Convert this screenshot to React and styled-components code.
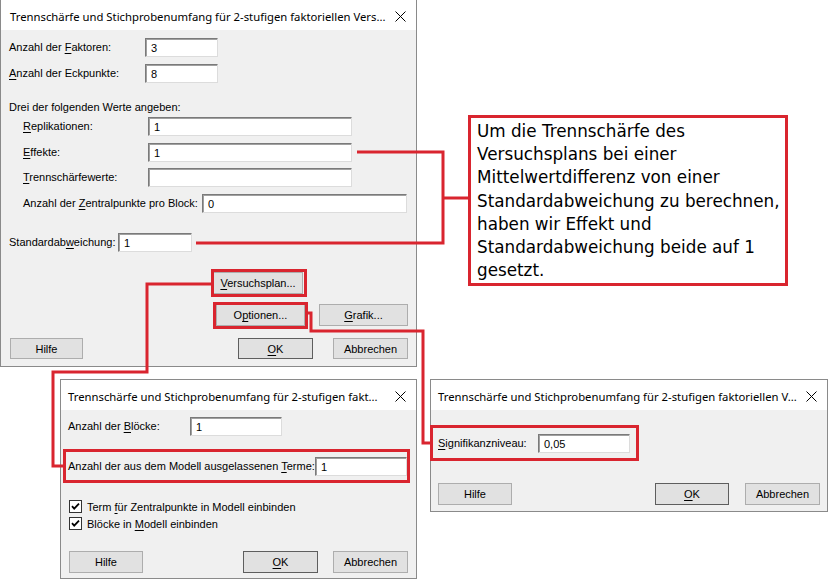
import React from 'react';
import styled, { createGlobalStyle } from 'styled-components';

const RED = '#d9252f';

const Global = createGlobalStyle`
  html, body { margin: 0; padding: 0; background: #fff; }
  body { font-family: "Liberation Sans", Arial, sans-serif; font-size: 11px; color: #000; }
`;

const Canvas = styled.div`
  position: relative;
  width: 828px;
  height: 580px;
  overflow: hidden;
  background: #fff;
`;

const Window = styled.div`
  position: absolute;
  left: ${p => p.$x}px;
  top: ${p => p.$y}px;
  width: ${p => p.$w}px;
  height: ${p => p.$h}px;
  box-sizing: border-box;
  border: 1px solid #8a8a8a;
  border-top-color: ${p => (p.$noTop ? 'transparent' : '#8a8a8a')};
  border-top-width: ${p => (p.$noTop ? 0 : 1)}px;
  background: #f0f0f0;
  display: flex;
  flex-direction: column;
`;

const TitleBar = styled.div`
  height: 30px;
  flex-shrink: 0;
  background: #fff;
  display: flex;
  align-items: center;
  justify-content: space-between;
  padding: 2px 10px 0 ${p => p.$pl}px;
  box-sizing: border-box;
`;

const TitleText = styled.span`
  white-space: nowrap;
  font-family: "Noto Sans", "DejaVu Sans", sans-serif;
  font-size: 11.3px;
`;

const CloseIcon = () => (
  <svg width="11" height="11" viewBox="0 0 11 11">
    <path d="M0.5 0.5 L10.5 10.5 M10.5 0.5 L0.5 10.5" stroke="#000" strokeWidth="1" fill="none" />
  </svg>
);

const Body = styled.div`
  flex: 1;
  display: flex;
  flex-direction: column;
  padding: ${p => p.$pt}px ${p => p.$pr}px 0 ${p => p.$pl}px;
`;

const Row = styled.div`
  display: flex;
  align-items: center;
  margin-top: ${p => p.$mt || 0}px;
  padding-left: ${p => p.$indent || 0}px;
  height: ${p => p.$h || 19}px;
`;

const Label = styled.span`
  width: ${p => p.$w}px;
  flex-shrink: 0;
  white-space: nowrap;
  padding-bottom: 2px;
`;

const Header = styled.div`
  margin-top: ${p => p.$mt}px;
  height: 16px;
  line-height: 16px;
  white-space: nowrap;
`;

const Input = styled.div`
  width: ${p => p.$w}px;
  height: 19px;
  box-sizing: border-box;
  background: #fff;
  border: 1px solid;
  border-color: #7a7a7a #dcdcdc #dcdcdc #7a7a7a;
  box-shadow: inset 1px 1px 0 #a0a0a0;
  padding-left: 5px;
  line-height: 18px;
  white-space: nowrap;
`;

const Key = styled.u`
  text-decoration: underline;
  text-underline-offset: 2px;
`;

const ButtonRow = styled.div`
  display: flex;
  align-items: center;
  margin-top: ${p => p.$mt}px;
  padding-left: ${p => p.$pl || 0}px;
  gap: ${p => p.$gap || 0}px;
`;

const Spacer = styled.div`
  flex: 1;
`;

const Button = styled.div`
  width: ${p => p.$w || 75}px;
  height: ${p => p.$h || 22}px;
  box-sizing: border-box;
  background: #e1e1e1;
  border: 1px solid ${p => (p.$default ? '#5e5e5e' : '#adadad')};
  display: flex;
  align-items: center;
  justify-content: center;
  white-space: nowrap;
  margin-left: ${p => p.$ml || 0}px;
`;

const CheckRow = styled.div`
  display: flex;
  align-items: center;
  gap: 5px;
  height: 17px;
  margin-top: ${p => p.$mt || 0}px;
  padding-left: 1px;
`;

const CheckBox = () => (
  <svg width="13" height="13" viewBox="0 0 13 13">
    <rect x="0.5" y="0.5" width="12" height="12" fill="#fff" stroke="#333" />
    <path d="M3 6.2 L5.2 8.6 L10 3.6" stroke="#000" strokeWidth="1.8" fill="none" />
  </svg>
);

const Callout = styled.div`
  position: absolute;
  left: 468px;
  top: 115px;
  width: 320px;
  height: 171px;
  box-sizing: border-box;
  border: 3px solid ${RED};
  background: #fff;
  padding: 2px 6px 0 6px;
  font-family: "DejaVu Sans", Verdana, sans-serif;
  font-size: 16.8px;
  line-height: 23.2px;
  color: #000;
  white-space: nowrap;
`;

const Overlay = styled.svg`
  position: absolute;
  left: 0;
  top: 0;
  pointer-events: none;
`;

export default function App() {
  return (
    <>
      <Global />
      <Canvas>
        {/* Main dialog */}
        <Window $x={0} $y={0} $w={417} $h={367} $noTop>
          <TitleBar $pl={9}>
            <TitleText>Trennschärfe und Stichprobenumfang für 2-stufigen faktoriellen Vers...</TitleText>
            <CloseIcon />
          </TitleBar>
          <Body $pt={8} $pr={8} $pl={8}>
            <Row>
              <Label $w={136}>Anzahl der <Key>F</Key>aktoren:</Label>
              <Input $w={73}>3</Input>
            </Row>
            <Row $mt={7}>
              <Label $w={136}><Key>A</Key>nzahl der Eckpunkte:</Label>
              <Input $w={73}>8</Input>
            </Row>
            <Header $mt={16}>Drei der folgenden Werte angeben:</Header>
            <Row $mt={2} $indent={14}>
              <Label $w={125}><Key>R</Key>eplikationen:</Label>
              <Input $w={204}>1</Input>
            </Row>
            <Row $mt={7} $indent={14}>
              <Label $w={125}><Key>E</Key>ffekte:</Label>
              <Input $w={204}>1</Input>
            </Row>
            <Row $mt={6} $indent={14}>
              <Label $w={125}><Key>T</Key>rennschärfewerte:</Label>
              <Input $w={204}></Input>
            </Row>
            <Row $mt={7} $indent={14}>
              <Label $w={179}>Anzahl der <Key>Z</Key>entralpunkte pro Block:</Label>
              <Input $w={205}>0</Input>
            </Row>
            <Row $mt={20}>
              <Label $w={109}>Standardab<Key>w</Key>eichung:</Label>
              <Input $w={74}>1</Input>
            </Row>
            <ButtonRow $mt={20} $pl={204}>
              <Button $w={90}><span><Key>V</Key>ersuchsplan...</span></Button>
            </ButtonRow>
            <ButtonRow $mt={10} $pl={207} $gap={14}>
              <Button $w={89}><span>O<Key>p</Key>tionen...</span></Button>
              <Button $w={89}><span><Key>G</Key>rafik...</span></Button>
            </ButtonRow>
            <ButtonRow $mt={12} $pl={1}>
              <Button $w={73} $h={21}>Hilfe</Button>
              <Spacer />
              <Button $w={75} $h={21} $default><span><Key>O</Key>K</span></Button>
              <Button $w={75} $h={21} $ml={20}>Abbrechen</Button>
            </ButtonRow>
          </Body>
        </Window>

        {/* Versuchsplan sub-dialog */}
        <Window $x={60} $y={379} $w={357} $h={200}>
          <TitleBar $pl={7}>
            <TitleText>Trennschärfe und Stichprobenumfang für 2-stufigen fakt...</TitleText>
            <CloseIcon />
          </TitleBar>
          <Body $pt={7} $pr={8} $pl={7}>
            <Row>
              <Label $w={122}>Anzahl der <Key>B</Key>löcke:</Label>
              <Input $w={92}>1</Input>
            </Row>
            <Row $mt={21}>
              <Label $w={247}>Anzahl der aus dem Modell ausgelassenen <Key>T</Key>erme:</Label>
              <Input $w={92}>1</Input>
            </Row>
            <CheckRow $mt={22}>
              <CheckBox />
              <span>Term <Key>f</Key>ür Zentralpunkte in Modell einbinden</span>
            </CheckRow>
            <CheckRow>
              <CheckBox />
              <span>Blöcke in <Key>M</Key>odell einbinden</span>
            </CheckRow>
            <ButtonRow $mt={19} $pl={1}>
              <Button $w={74}>Hilfe</Button>
              <Spacer />
              <Button $w={75} $default><span><Key>O</Key>K</span></Button>
              <Button $w={75} $ml={15}>Abbrechen</Button>
            </ButtonRow>
          </Body>
        </Window>

        {/* Optionen sub-dialog */}
        <Window $x={430} $y={379} $w={398} $h={133}>
          <TitleBar $pl={7}>
            <TitleText>Trennschärfe und Stichprobenumfang für 2-stufigen faktoriellen V...</TitleText>
            <CloseIcon />
          </TitleBar>
          <Body $pt={24} $pr={7} $pl={7}>
            <Row>
              <Label $w={100}><Key>S</Key>ignifikanzniveau:</Label>
              <Input $w={92}>0,05</Input>
            </Row>
            <ButtonRow $mt={30} $pl={0}>
              <Button $w={74}>Hilfe</Button>
              <Spacer />
              <Button $w={74} $default><span><Key>O</Key>K</span></Button>
              <Button $w={75} $ml={16}>Abbrechen</Button>
            </ButtonRow>
          </Body>
        </Window>

        <Callout>
          Um die Trennschärfe des<br />
          Versuchsplans bei einer<br />
          Mittelwertdifferenz von einer<br />
          Standardabweichung zu berechnen,<br />
          haben wir Effekt und<br />
          Standardabweichung beide auf 1<br />
          gesetzt.
        </Callout>

        <Overlay width="828" height="580" viewBox="0 0 828 580">
          <g fill="none" stroke={RED} strokeWidth="3">
            <rect x="212.5" y="270.5" width="93" height="25" />
            <rect x="214.5" y="303.5" width="92" height="24" />
            <rect x="64.5" y="450.5" width="344" height="31" />
            <rect x="431.5" y="426.5" width="206" height="33" />
            <path d="M357 152 H443 V243 H196" />
            <path d="M443 198 H468" />
            <path d="M211 284 H147 V372 H53 V466 H63" />
            <path d="M306 313 H311 V331 H423 V443 H430" />
          </g>
        </Overlay>
      </Canvas>
    </>
  );
}
